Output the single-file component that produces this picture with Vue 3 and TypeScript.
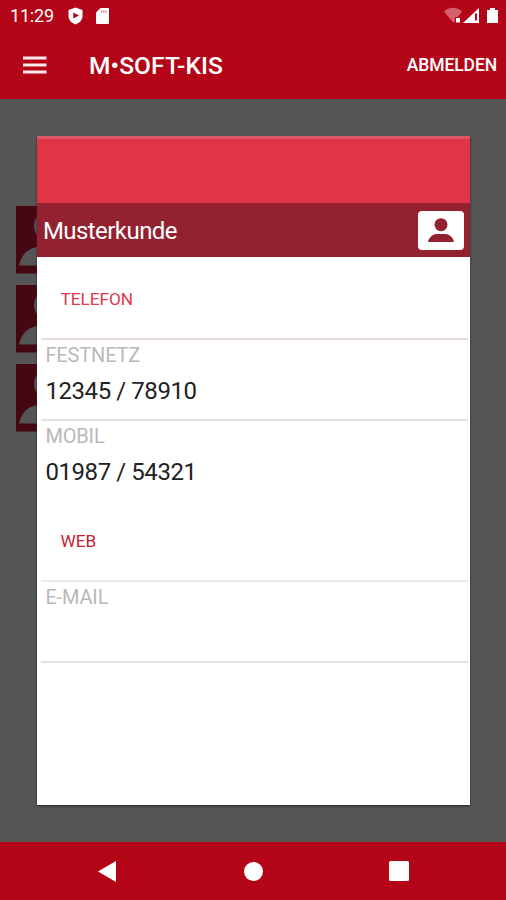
<script setup lang="ts">
interface Field {
  label: string
  value: string
  divider: boolean
}
interface Section {
  title: string
  tone: string
  fields: Field[]
}

const customers: number[] = [1, 2, 3]

const sections: Section[] = [
  {
    title: 'TELEFON',
    tone: 'phone',
    fields: [
      { label: 'FESTNETZ', value: '12345 / 78910', divider: true },
      { label: 'MOBIL', value: '01987 / 54321', divider: false },
    ],
  },
  {
    title: 'WEB',
    tone: 'web',
    fields: [{ label: 'E-MAIL', value: '', divider: true }],
  },
]
</script>

<template>
  <div class="screen">
    <header class="top">
      <div class="status">
        <span class="clock">11:29</span>
        <svg class="shield" width="15" height="18" viewBox="0 0 15 18">
          <path d="M7.5 .5 14.5 3v6c0 4-3 7-7 8.500C3.500 16 .5 13 .5 9V3z" fill="#fff" />
          <path d="M5.300 5.500 11 8.500 5.300 11.500z" fill="#b40518" />
        </svg>
        <svg class="sd" width="13" height="16" viewBox="0 0 13 16">
          <path d="M4.500 0H12a1 1 0 0 1 1 1v14a1 1 0 0 1-1 1H1a1 1 0 0 1-1-1V4.500z" fill="#fff" />
          <path d="M5 2.500h1.200v2H5zM7.200 2.500h1.200v2H7.200zM9.400 2.500h1.200v2H9.400z" fill="#d8707b" />
        </svg>
        <svg class="signals" width="55" height="18" viewBox="0 0 55 18">
          <path d="M0 4.500C5-.5 13-.5 18 4.500L9.500 16z" fill="#d5606d" />
          <path d="M11 10h6.500v7H11z" fill="#b40518" />
          <path d="M12 11h4v4.500h-4z" fill="#fff" />
          <path d="M19 16 35 1v15z" fill="#fff" />
          <path d="M31 6.500h2v7h-2z" fill="#b40518" />
          <path d="M43 3h3V1h5v2h3v13H43z" fill="#fff" />
        </svg>
      </div>
      <div class="appbar">
        <svg class="menu" width="24" height="18" viewBox="0 0 24 18">
          <path d="M0 .5h23.500v3H0zM0 7.500h23.500v3H0zM0 14.500h23.500v3H0z" fill="#ffe9ec" />
        </svg>
        <h1 class="title">M•SOFT-KIS</h1>
        <span class="logout">ABMELDEN</span>
      </div>
    </header>

    <main class="content">
      <div class="list">
        <svg v-for="c in customers" :key="c" class="avatar" width="67" height="67.500" viewBox="0 0 67 67.500">
          <path d="M0 0h67v67.500H0z" fill="#450812" />
          <circle cx="33.500" cy="20" r="15.500" fill="#555" />
          <path d="M3 59.500C5 50 11 42 22 41h23c11 1 17 9 19 18.500z" fill="#555" />
        </svg>
      </div>

      <section class="dialog">
        <div class="banner"></div>
        <div class="namebar">
          <span class="name">Musterkunde</span>
          <span class="contact">
            <svg width="26" height="24" viewBox="0 0 26 24">
              <circle cx="13" cy="6.700" r="6.500" fill="#93212f" />
              <path d="M0 24c.6-3.500 3.500-7.500 8.500-8h9c5 .5 7.900 4.500 8.500 8z" fill="#93212f" />
            </svg>
          </span>
        </div>
        <template v-for="s in sections" :key="s.title">
          <h2 class="heading" :class="s.tone"><span>{{ s.title }}</span></h2>
          <div v-for="f in s.fields" :key="f.label" class="field" :class="{ divided: f.divider }">
            <div class="label">{{ f.label }}</div>
            <div class="value">{{ f.value }}</div>
          </div>
        </template>
      </section>
    </main>

    <nav class="nav">
      <svg width="18" height="21" viewBox="0 0 18 21"><path d="M18 0v21L0 10.500z" fill="#fff" /></svg>
      <svg width="19" height="19" viewBox="0 0 19 19"><circle cx="9.500" cy="9.500" r="9.500" fill="#fff" /></svg>
      <svg width="20" height="20" viewBox="0 0 20 20"><rect width="20" height="20" rx="1.500" fill="#fff" /></svg>
    </nav>
  </div>
</template>

<style>
body {
  margin: 0;
}
</style>

<style scoped>
.screen {
  width: 506px;
  height: 900px;
  display: flex;
  flex-direction: column;
  overflow: hidden;
  background: #555;
  font-family: Roboto, sans-serif;
}
.top {
  height: 99px;
  flex: none;
  background: #b40518;
  color: #fff;
}
.status {
  height: 32px;
  display: flex;
  align-items: center;
  box-sizing: border-box;
  padding: 0 7px 0 10px;
}
.clock {
  width: 58px;
  font-size: 18px;
  line-height: 32px;
  letter-spacing: -0.2px;
}
.shield {
  margin-right: 13px;
}
.signals {
  margin-left: auto;
}
.appbar {
  height: 67px;
  display: flex;
  align-items: center;
  box-sizing: border-box;
  padding: 0 9px 2px 23px;
}
.title {
  margin: 3px auto 0 42px;
  font-size: 24.500px;
  font-weight: 500;
  line-height: 30px;
  letter-spacing: 0.1px;
}
.logout {
  font-size: 17.500px;
  font-weight: 500;
  letter-spacing: -0.1px;
}
.content {
  position: relative;
  flex: 1;
}
.list {
  display: flex;
  flex-direction: column;
  gap: 11.500px;
  padding: 107px 16px 0;
}
.dialog {
  position: absolute;
  left: 37.400px;
  top: 37px;
  width: 432.800px;
  height: 669px;
  background: #fff;
  box-shadow: 0 1px 2px #222;
}
.banner {
  height: 67px;
  box-sizing: border-box;
  border-top: 3px solid #dc5867;
  background: #df3547;
}
.namebar {
  height: 54px;
  display: flex;
  align-items: center;
  justify-content: space-between;
  box-sizing: border-box;
  padding: 0 6px 0 5.500px;
  background: #93212f;
  color: #fff;
}
.name {
  margin-top: 2px;
  font-size: 24px;
  line-height: 54px;
  letter-spacing: -0.55px;
}
.contact {
  width: 46px;
  height: 39px;
  display: grid;
  place-items: center;
  border-radius: 4px;
  background: #fff;
}
.heading {
  height: 83px;
  margin: 0 2px 0 4px;
  box-sizing: border-box;
  padding: 31px 0 0 19px;
  border-bottom: 2px solid #e8d9dc;
  font-size: 17.200px;
  font-weight: 400;
  line-height: 22px;
}
.phone {
  color: #e0384a;
}
.web {
  height: 81px;
  padding-top: 29px;
  border-bottom-color: #eee8e9;
  color: #c91c30;
}
.field {
  height: 80.500px;
  margin: 0 2px 0 4px;
  box-sizing: border-box;
  padding: 3px 0 0 4px;
  border-bottom: 2px solid transparent;
}
.divided {
  border-bottom-color: #e2e2e2;
}
.label {
  color: #b9b9b9;
  font-size: 20px;
  line-height: 24px;
  letter-spacing: -0.15px;
}
.value {
  margin-top: 10px;
  color: #222;
  font-size: 24px;
  line-height: 28px;
  letter-spacing: -0.42px;
}
.nav {
  height: 58px;
  flex: none;
  display: grid;
  grid-template-columns: repeat(3, 146px);
  justify-content: center;
  align-items: center;
  justify-items: center;
  background: #b40518;
}
</style>
